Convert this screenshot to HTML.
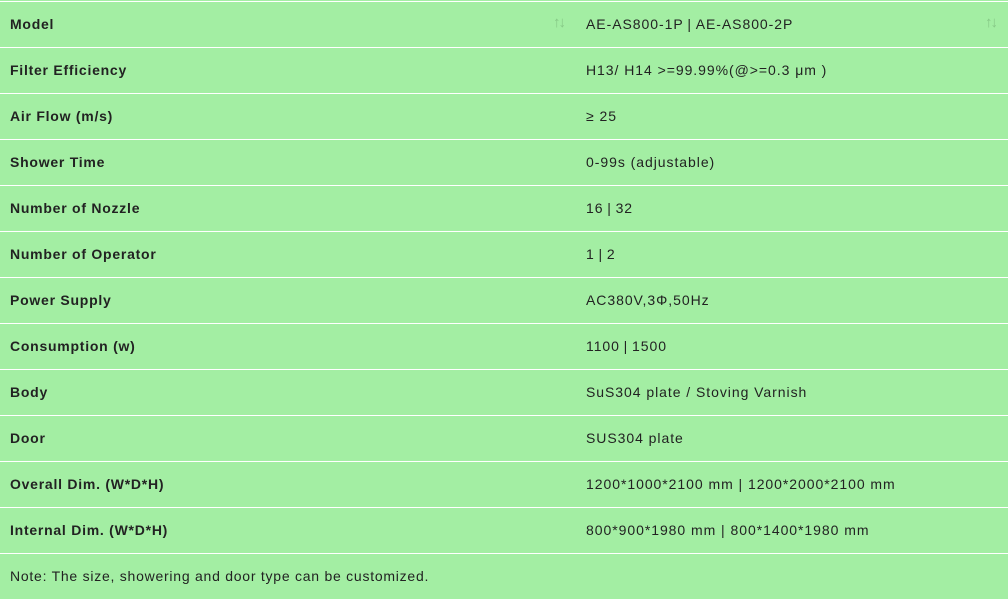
<!DOCTYPE html>
<html><head><style>
body{margin:0;width:1008px;height:595px;background:#a3eea3;font-family:"Liberation Sans",sans-serif;color:#222;overflow:hidden;position:relative}
.r{position:absolute;left:0;width:1008px;height:45px;border-top:1px solid #fff}
.a{position:absolute;left:10px;top:14px;font-size:14px;font-weight:bold;letter-spacing:0.75px}
.b{position:absolute;left:586px;top:14px;font-size:14px;letter-spacing:0.95px}
.s{position:absolute;top:12px;font-size:15px;color:#86c886;letter-spacing:-2px}
</style></head><body>
<div class="r" style="top:1px"><span class="a">Model</span><span class="s" style="left:553px">↑↓</span><span class="b">AE-AS800-1P&thinsp;|&thinsp;AE-AS800-2P</span><span class="s" style="left:985px">↑↓</span></div>
<div class="r" style="top:47px"><span class="a">Filter Efficiency</span><span class="b">H13/ H14 &gt;=99.99%(@&gt;=0.3 μm )</span></div>
<div class="r" style="top:93px"><span class="a">Air Flow (m/s)</span><span class="b">≥ 25</span></div>
<div class="r" style="top:139px"><span class="a">Shower Time</span><span class="b">0-99s (adjustable)</span></div>
<div class="r" style="top:185px"><span class="a">Number of Nozzle</span><span class="b">16&thinsp;|&thinsp;32</span></div>
<div class="r" style="top:231px"><span class="a">Number of Operator</span><span class="b">1&thinsp;|&thinsp;2</span></div>
<div class="r" style="top:277px"><span class="a">Power Supply</span><span class="b">AC380V,3Φ,50Hz</span></div>
<div class="r" style="top:323px"><span class="a">Consumption (w)</span><span class="b">1100&thinsp;|&thinsp;1500</span></div>
<div class="r" style="top:369px"><span class="a">Body</span><span class="b">SuS304 plate / Stoving Varnish</span></div>
<div class="r" style="top:415px"><span class="a">Door</span><span class="b">SUS304 plate</span></div>
<div class="r" style="top:461px"><span class="a">Overall Dim. (W*D*H)</span><span class="b">1200*1000*2100 mm | 1200*2000*2100 mm</span></div>
<div class="r" style="top:507px"><span class="a">Internal Dim. (W*D*H)</span><span class="b">800*900*1980 mm | 800*1400*1980 mm</span></div>
<div class="r" style="top:553px"><span class="a" style="font-weight:normal">Note: The size, showering and door type can be customized.</span></div>
</body></html>
